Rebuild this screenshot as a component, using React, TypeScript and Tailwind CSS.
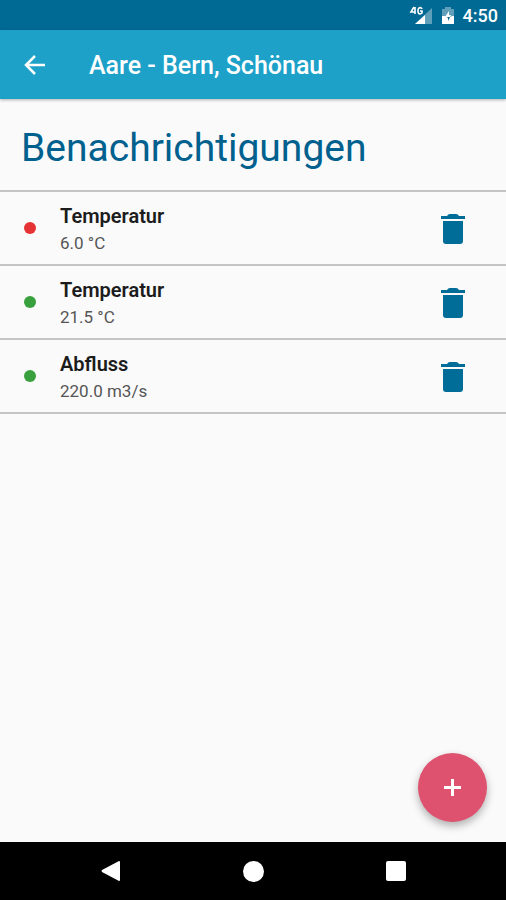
interface Notification {
    id: number,
    label: string,
    value: string,
    active: boolean,
}

const notifications: Notification[] = [
    { id: 1, label: "Temperatur", value: "6.0 °C", active: false },
    { id: 2, label: "Temperatur", value: "21.5 °C", active: true },
    { id: 3, label: "Abfluss", value: "220.0 m3/s", active: true },
]

function StatusBar() {
    return (
        <div className="flex h-[30px] shrink-0 items-center justify-end bg-[#006a94] pr-2 pt-0.5 text-white">
            <svg className="mr-2 h-5 w-6" viewBox="0 0 24 20" aria-hidden="true">
                <path d="M23 2v16H6z" fill="#5f9fba" />
                <path d="M16 9v9H6z" fill="#fff" />
                <path d="M5 1L2 6h4M6 1v7M13 3C12 1 9 1 9 5S12 8 13 7V5h-2" fill="none" stroke="#fff" strokeWidth="1.6" />
            </svg>
            <svg className="mr-2 h-5 w-3.5" viewBox="0 0 14 20" aria-hidden="true">
                <path d="M1 3h3V1h6v2h3v8H1z" fill="#5f9fba" />
                <path d="M1 10h3l3 2 4-2h2v8H1z" fill="#fff" />
                <path d="M8 5v4h2l-3 6v-4H4z" fill="#fff" />
                <path d="M7 11h2l-2 4z" fill="#006a94" />
            </svg>
            <span className="text-lg leading-5 font-medium">4:50</span>
        </div>
    )
}

function Header() {
    return (
        <header className="relative flex h-[69px] shrink-0 items-center bg-[#1da1c9] pl-[23px] text-white shadow-[0_1px_3px_rgba(0,0,0,0.3)]">
            <button type="button" aria-label="Zurück" className="mr-[42px]">
                <svg className="size-6" viewBox="0 0 24 24" fill="none" stroke="currentColor" strokeWidth="2.5" aria-hidden="true">
                    <path d="M22 12H4M12 3L3 12l9 9" />
                </svg>
            </button>
            <h1 className="pt-0.5 text-[25px] font-medium">Aare - Bern, Schönau</h1>
        </header>
    )
}

function NotificationRow({ label, value, active }: Notification) {
    return (
        <li className="flex h-[74px] items-center border-b-2 border-[#c4c4c4] pl-6 pr-[41px]">
            <span className={active ? "size-3 rounded-full bg-[#38a03c]" : "size-3 rounded-full bg-[#e53232]"} />
            <div className="ml-6 flex-1 pt-0.5">
                <p className="text-xl leading-7 font-semibold text-[#1c1c1c]">{ label }</p>
                <p className="text-[17px] leading-[26px] text-[#555555]">{ value }</p>
            </div>
            <button type="button" aria-label={`${label} ${value} löschen`} className="pt-0.5">
                <svg className="h-[30px] w-6" viewBox="0 0 24 30" fill="#006c98" aria-hidden="true">
                    <path d="M0 5V2h6q1-2 3-2h6q2 0 3 2h6v3z" />
                    <path d="M2 7h20v20q0 3-3 3H5q-3 0-3-3z" />
                </svg>
            </button>
        </li>
    )
}

function NavigationBar() {
    return (
        <nav className="flex h-[58px] shrink-0 items-center justify-center gap-[122px] bg-black text-white">
            <button type="button" aria-label="Zurück">
                <svg className="size-5" viewBox="0 0 20 20" fill="currentColor" aria-hidden="true">
                    <path d="M18 0q1 0 1 1v18q0 1-1 1L1 11q-1-1 0-2z" />
                </svg>
            </button>
            <button type="button" aria-label="Startseite" className="size-[21px] rounded-full bg-white" />
            <button type="button" aria-label="Übersicht" className="size-5 rounded-xs bg-white" />
        </nav>
    )
}

export default function App() {
    return (
        <div className="flex min-h-screen flex-col bg-[#fafafa] font-[Roboto,sans-serif]">
            <StatusBar />
            <Header />
            <main className="relative flex-1">
                <h2 className="border-b-2 border-[#c4c4c4] px-[21px] pt-[22px] pb-[15px] text-[39px] leading-[54px] text-[#00608e]">
                    Benachrichtigungen
                </h2>
                <ul>
                    {notifications.map((notification) => (
                        <NotificationRow key={notification.id} {...notification} />
                    ))}
                </ul>
                <button
                    type="button"
                    aria-label="Benachrichtigung hinzufügen"
                    className="absolute right-[19px] bottom-5 flex size-[69px] items-center justify-center rounded-full bg-[#df526f] text-white shadow-[0_4px_8px_rgba(0,0,0,0.3)]"
                >
                    <svg className="size-[17px]" viewBox="0 0 17 17" fill="currentColor" aria-hidden="true">
                        <path d="M7 0h3v7h7v3h-7v7H7v-7H0V7h7z" />
                    </svg>
                </button>
            </main>
            <NavigationBar />
        </div>
    )
}
